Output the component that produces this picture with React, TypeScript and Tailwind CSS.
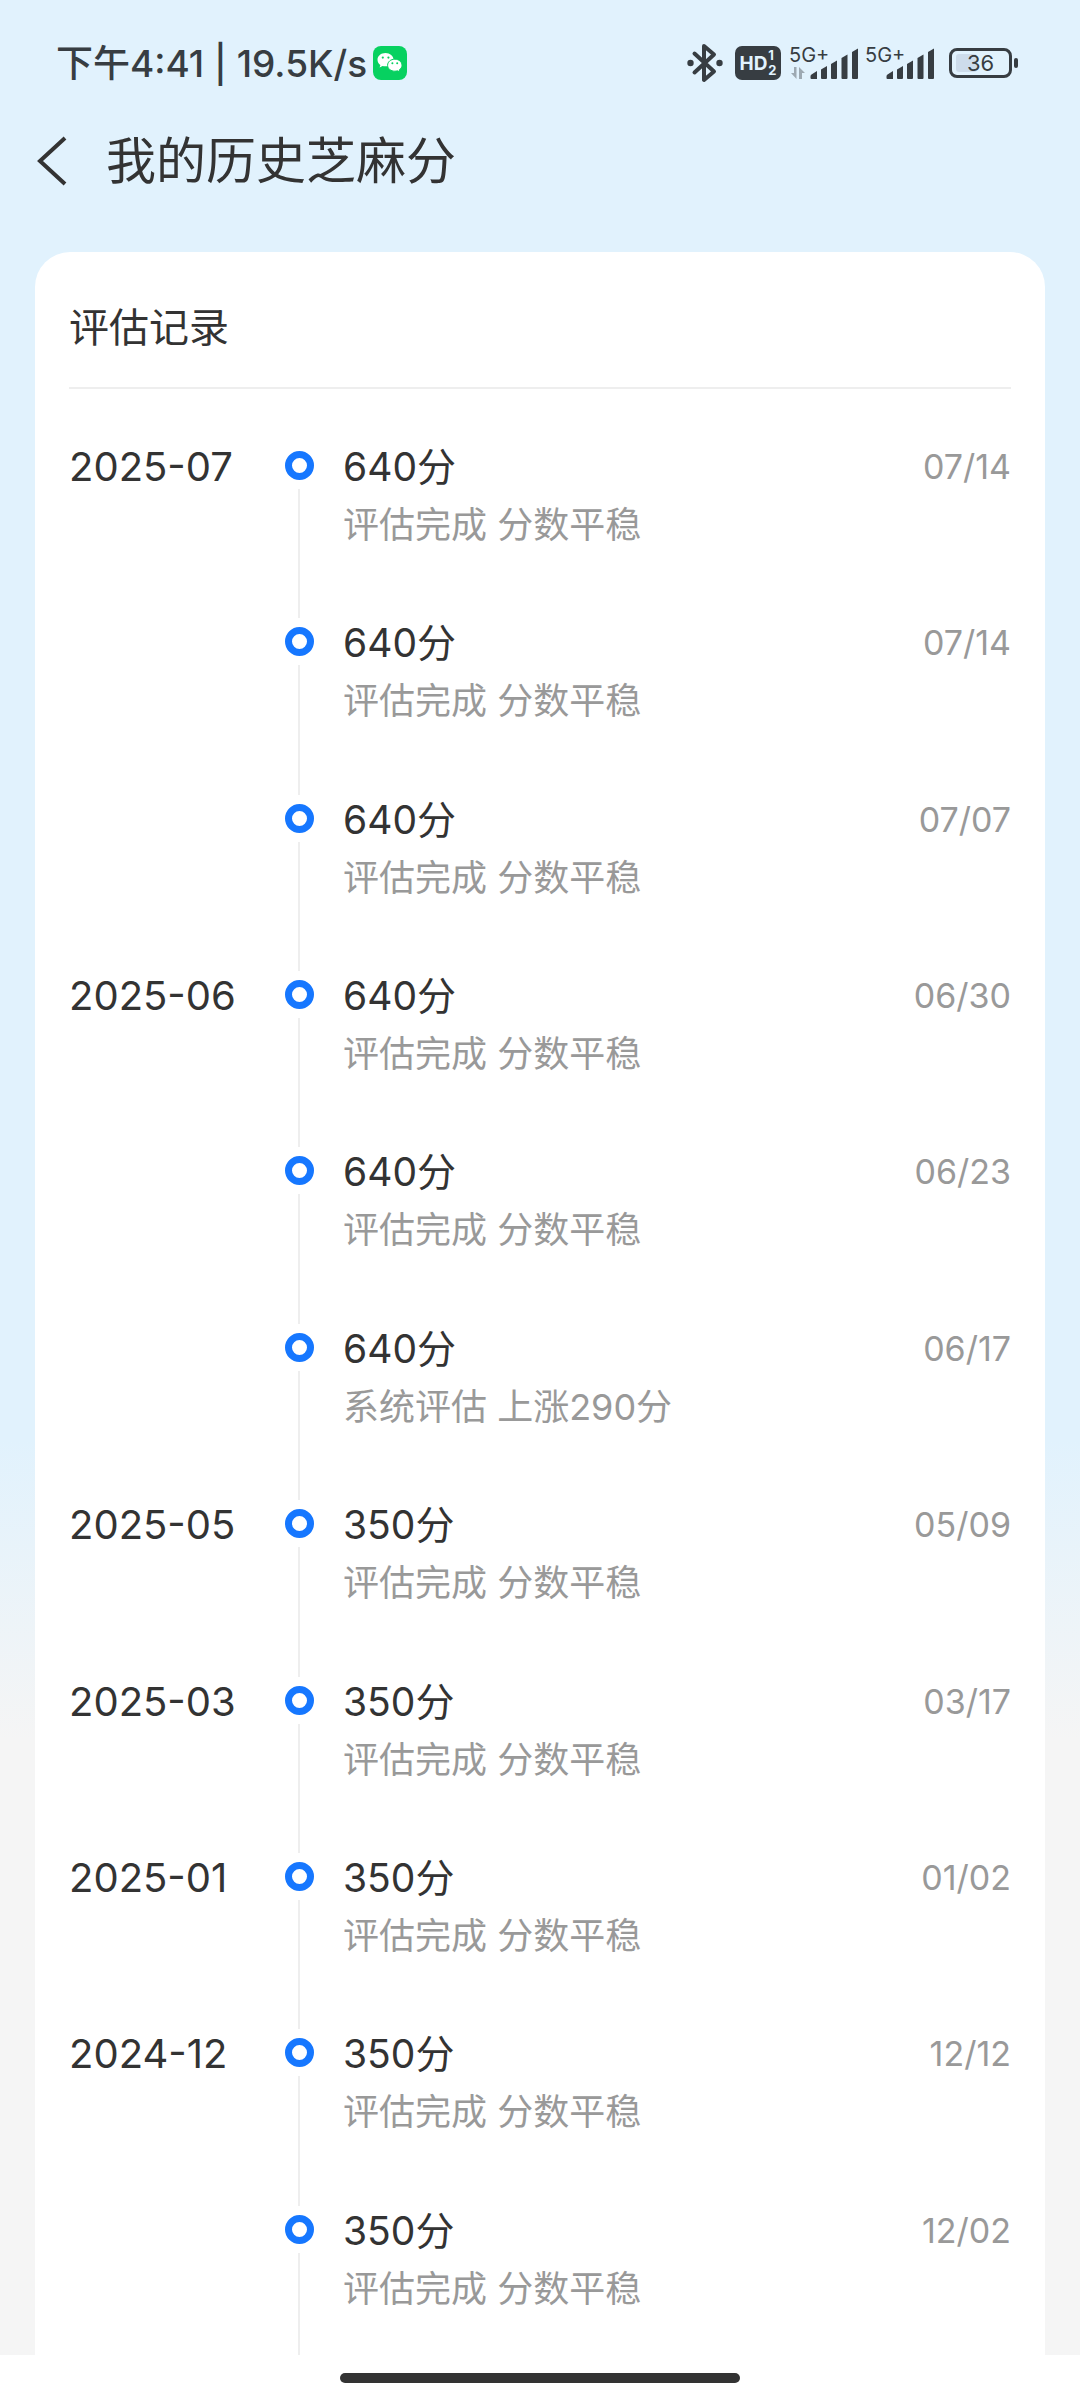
type HistoryEntry = {
  month?: string;
  score: number;
  desc: string;
  date: string;
};

const STABLE = "评估完成 分数平稳";

const ENTRIES: HistoryEntry[] = [
  { month: "2025-07", score: 640, desc: STABLE, date: "07/14" },
  { score: 640, desc: STABLE, date: "07/14" },
  { score: 640, desc: STABLE, date: "07/07" },
  { month: "2025-06", score: 640, desc: STABLE, date: "06/30" },
  { score: 640, desc: STABLE, date: "06/23" },
  { score: 640, desc: "系统评估 上涨290分", date: "06/17" },
  { month: "2025-05", score: 350, desc: STABLE, date: "05/09" },
  { month: "2025-03", score: 350, desc: STABLE, date: "03/17" },
  { month: "2025-01", score: 350, desc: STABLE, date: "01/02" },
  { month: "2024-12", score: 350, desc: STABLE, date: "12/12" },
  { score: 350, desc: STABLE, date: "12/02" },
];

function WechatIcon() {
  return (
    <svg className="size-[34px]" viewBox="0 0 34 34" aria-label="微信">
      <rect width="34" height="34" rx="8" fill="#07d160" />
      <path d="M12.500 7C8 7 4.500 9.900 4.500 13.700c0 2.100 1.100 3.900 2.900 5.200l-.8 2.500 2.900-1.500c1 .3 2 .4 3 .4 4.500 0 8-2.900 8-6.600S17 7 12.500 7z" fill="#fff" />
      <path d="M21.800 13.200c-4 0-7.200 2.600-7.200 6s3.200 6 7.200 6c.9 0 1.800-.1 2.600-.4l2.400 1.400-.6-2.200c1.700-1.100 2.800-2.800 2.800-4.800 0-3.400-3.200-6-7.200-6z" fill="#fff" stroke="#07d160" strokeWidth="1" />
      <g fill="#07d160">
        <circle cx="9.800" cy="11.600" r="1.100" />
        <circle cx="15.400" cy="11.600" r="1.100" />
        <circle cx="19.400" cy="17.300" r="1" />
        <circle cx="24.200" cy="17.300" r="1" />
      </g>
    </svg>
  );
}

function BluetoothIcon() {
  return (
    <svg className="h-[40px] w-[36px]" viewBox="0 0 36 40" fill="none" stroke="currentColor" strokeWidth="4" strokeLinejoin="round" strokeLinecap="round" aria-label="蓝牙">
      <path d="M7.500 10.500 27 28.500 17 37V3l10 8.500L7.500 29.500" />
      <circle cx="3.500" cy="20" r="3.200" fill="currentColor" stroke="none" />
      <circle cx="32.500" cy="20" r="3.200" fill="currentColor" stroke="none" />
    </svg>
  );
}

function HdBadge() {
  return (
    <div className="flex h-[34px] w-[46px] items-center justify-center gap-px rounded-[7px] bg-[#373d42] text-[#e2f3fe]">
      <span className="text-[19px] leading-none font-bold">HD</span>
      <span className="flex flex-col text-[13px] leading-[15px] font-bold">
        <span>1</span>
        <span>2</span>
      </span>
    </div>
  );
}

function Signal({ transfer = false }: { transfer?: boolean }) {
  return (
    <div className="relative h-[34px] w-[70px]">
      <span className="absolute top-0 left-0 text-[20px] leading-[18px]">5G+</span>
      <svg className="size-full" viewBox="0 0 70 34" fill="currentColor">
        {transfer && (
          <path d="M7.500 21v12L2 27h3V21zM10 33V21l6 6h-3v6z" opacity="0.4" />
        )}
        <path d="M21.500 30.500q0-1.500 1-2L28 25v8h-5.500q-1 0-1-1z" />
        <path d="M32 23.500 38 20v12q0 1-1 1h-4q-1 0-1-1z" />
        <path d="M42 18 48 14.500v17.500q0 1-1 1h-4q-1 0-1-1z" />
        <path d="M52.500 12 58.500 8.500V32q0 1-1 1h-4q-1 0-1-1z" />
        <path d="M63 6 69 2.500V32q0 1-1 1h-4q-1 0-1-1z" />
      </svg>
    </div>
  );
}

function Battery({ level }: { level: number }) {
  return (
    <div className="flex items-center gap-[2px]" aria-label="电量">
      <div className="relative flex h-[30px] w-[63px] items-center justify-center rounded-[8px] border-[3px] border-current">
        <div className="absolute inset-y-[3px] left-[4px] rounded-[3px] bg-[#cddceb]" style={{ width: `${level}%` }} />
        <span className="relative text-[22px] leading-none">{level}</span>
      </div>
      <div className="h-[10px] w-[4px] rounded-[2px] bg-current" />
    </div>
  );
}

function StatusBar() {
  return (
    <div className="flex h-[110px] items-center justify-between pt-4 pr-[62px] pl-[56px] text-[#373d42]">
      <div className="flex items-center gap-[6px]">
        <span className="text-[37px] leading-none font-medium">下午4:41 | 19.5K/s</span>
        <WechatIcon />
      </div>
      <div className="flex items-center">
        <BluetoothIcon />
        <div className="ml-3"><HdBadge /></div>
        <div className="ml-2"><Signal transfer /></div>
        <div className="ml-[6px]"><Signal /></div>
        <div className="ml-[14px]"><Battery level={36} /></div>
      </div>
    </div>
  );
}

function TimelineRow({ entry, first }: { entry: HistoryEntry; first: boolean }) {
  return (
    <li className="flex">
      <div className="w-[214px] pt-[22px] text-[40px] leading-[60px] text-[#333]">{entry.month}</div>
      <div className="flex w-[32px] flex-col items-center">
        <div className={`h-[27px] w-[2px] ${first ? "" : "bg-[#eee]"}`} />
        <div className="my-[9px] size-[29px] shrink-0 rounded-full border-[7px] border-[#1677ff] bg-white" />
        <div className="w-[2px] flex-1 bg-[#eee]" />
      </div>
      <div className="flex-1 pt-[22px] pl-[28px]">
        <p className="text-[39px] leading-[60px] text-[#333]">{entry.score}分</p>
        <p className="text-[36px] leading-[56px] text-[#999]">{entry.desc}</p>
      </div>
      <time className="pt-[22px] text-[34px] leading-[60px] text-[#999]">{entry.date}</time>
    </li>
  );
}

export default function App() {
  return (
    <div className="flex min-h-screen flex-col bg-[linear-gradient(#e1f2fd_0px,#e1f2fd_1440px,#f5f5f5_1740px)] font-['Inter','Noto_Sans_CJK_SC',sans-serif]">
      <StatusBar />
      <header className="flex h-[102px] items-center text-[#333]">
        <button type="button" aria-label="返回" className="pl-[36px]">
          <svg className="h-[50px] w-[32px]" viewBox="0 0 32 50" fill="none" stroke="currentColor" strokeWidth="4">
            <path d="M29 2 4 25 29 48" />
          </svg>
        </button>
        <h1 className="ml-[38px] text-[50px] leading-none">我的历史芝麻分</h1>
      </header>

      <main className="mx-[35px] mt-[40px] flex flex-1 flex-col rounded-t-[35px] bg-white px-[34px]">
        <h2 className="border-b-2 border-[#eee] pt-[46px] pb-[29px] text-[40px] leading-[60px] text-[#333]">评估记录</h2>
        <ul className="mt-[26px] grid flex-1 auto-rows-fr">
          {ENTRIES.map((entry, i) => (
            <TimelineRow key={i} entry={entry} first={i === 0} />
          ))}
        </ul>
      </main>

      <footer className="flex h-[45px] items-center justify-center bg-white">
        <div className="h-[10px] w-[37%] rounded-full bg-[#333]" />
      </footer>
    </div>
  );
}
